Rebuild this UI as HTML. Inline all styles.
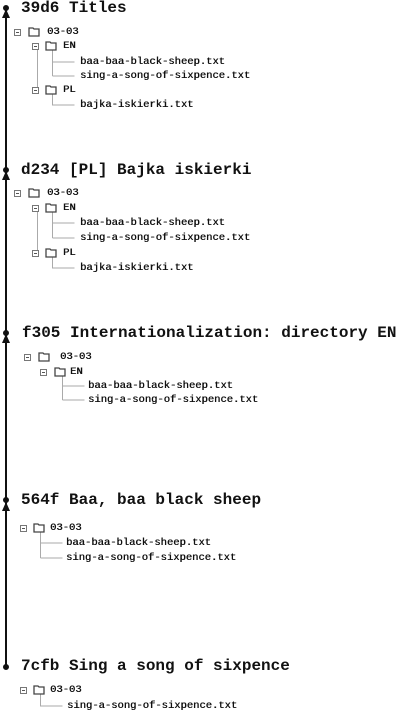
<!DOCTYPE html>
<html><head><meta charset="utf-8"><style>
body{margin:0;width:400px;height:712px;background:#fff;position:relative;overflow:hidden;font-family:"Liberation Mono",monospace;}
.h{position:absolute;font-weight:bold;font-size:16px;line-height:18px;color:#111;white-space:nowrap;}
.t{position:absolute;font-size:10.5px;line-height:12px;color:#111;white-space:nowrap;text-shadow:0.4px 0 0 #111;}
svg{position:absolute;left:0;top:0}
</style></head><body>
<svg width="400" height="712">
<g stroke="#111" stroke-width="2" fill="#111">
<line x1="6" y1="6" x2="6" y2="667"/>
<circle cx="6" cy="8" r="2"/><polygon points="6,9 2,18 10,18" stroke="none"/>
<circle cx="6" cy="170" r="2"/><polygon points="6,171 2,180 10,180" stroke="none"/>
<circle cx="6" cy="333" r="2"/><polygon points="6,334 2,343 10,343" stroke="none"/>
<circle cx="6" cy="500" r="2"/><polygon points="6,502 2,511 10,511" stroke="none"/>
<circle cx="6" cy="667" r="2"/>
</g>
<g stroke="#aaa" stroke-width="1" fill="none">
<path d="M37.5 50v40M52.5 50v26M52.5 62h22M52.5 76h22M52.5 94v11h22"/>
<path d="M37.5 212v41M52.5 212v26M52.5 223h22M52.5 238h22M52.5 257v11h22"/>
<path d="M62.5 376v24M62.5 386h22M62.5 400h22"/>
<path d="M40.5 532v26M40.5 543h22M40.5 558h22"/>
<path d="M40.5 694v12h22"/>
</g>
<g stroke="#777" stroke-width="1" fill="#fff">
<rect x="14.5" y="29.5" width="6" height="6"/><rect x="32.5" y="43.5" width="6" height="6"/><rect x="32.5" y="87.5" width="6" height="6"/>
<rect x="14.5" y="190.5" width="6" height="6"/><rect x="32.5" y="205.5" width="6" height="6"/><rect x="32.5" y="250.5" width="6" height="6"/>
<rect x="24.5" y="354.5" width="6" height="6"/><rect x="40.5" y="369.5" width="6" height="6"/>
<rect x="20.5" y="525.5" width="6" height="6"/><rect x="20.5" y="687.5" width="6" height="6"/>
</g>
<g stroke="#555" stroke-width="1">
<path d="M16 32.5h3M34 46.5h3M34 90.5h3M16 193.5h3M34 208.5h3M34 253.5h3M26 357.5h3M42 372.5h3M22 528.5h3M22 690.5h3"/>
</g>
<g stroke="#444" stroke-width="1.3" fill="#fff">
<path d="M29 28h4l1 1h5v7h-10z"/><path d="M46 42h4l1 1h5v7h-10z"/><path d="M46 86h4l1 1h5v7h-10z"/>
<path d="M29 189h4l1 1h5v7h-10z"/><path d="M46 204h4l1 1h5v7h-10z"/><path d="M46 249h4l1 1h5v7h-10z"/>
<path d="M39 353h4l1 1h5v7h-10z"/><path d="M55 368h4l1 1h5v7h-10z"/>
<path d="M34 524h4l1 1h5v7h-10z"/><path d="M34 686h4l1 1h5v7h-10z"/>
</g>
</svg>
<div class="h" style="left:21px;top:-1px">39d6 Titles</div>
<div class="t" style="left:47px;top:26px">03-03</div>
<div class="t" style="left:63px;top:40px">EN</div>
<div class="t" style="left:80px;top:56px">baa-baa-black-sheep.txt</div>
<div class="t" style="left:80px;top:70px">sing-a-song-of-sixpence.txt</div>
<div class="t" style="left:63px;top:84px">PL</div>
<div class="t" style="left:80px;top:99px">bajka-iskierki.txt</div>

<div class="h" style="left:21px;top:161px">d234 [PL] Bajka iskierki</div>
<div class="t" style="left:47px;top:187px">03-03</div>
<div class="t" style="left:63px;top:202px">EN</div>
<div class="t" style="left:80px;top:217px">baa-baa-black-sheep.txt</div>
<div class="t" style="left:80px;top:232px">sing-a-song-of-sixpence.txt</div>
<div class="t" style="left:63px;top:247px">PL</div>
<div class="t" style="left:80px;top:262px">bajka-iskierki.txt</div>

<div class="h" style="left:22px;top:324px">f305 Internationalization: directory EN</div>
<div class="t" style="left:60px;top:351px">03-03</div>
<div class="t" style="left:70px;top:366px">EN</div>
<div class="t" style="left:88px;top:380px">baa-baa-black-sheep.txt</div>
<div class="t" style="left:88px;top:394px">sing-a-song-of-sixpence.txt</div>

<div class="h" style="left:21px;top:491px">564f Baa, baa black sheep</div>
<div class="t" style="left:50px;top:522px">03-03</div>
<div class="t" style="left:66px;top:537px">baa-baa-black-sheep.txt</div>
<div class="t" style="left:66px;top:552px">sing-a-song-of-sixpence.txt</div>

<div class="h" style="left:21px;top:657px">7cfb Sing a song of sixpence</div>
<div class="t" style="left:50px;top:684px">03-03</div>
<div class="t" style="left:67px;top:700px">sing-a-song-of-sixpence.txt</div>
</body></html>
